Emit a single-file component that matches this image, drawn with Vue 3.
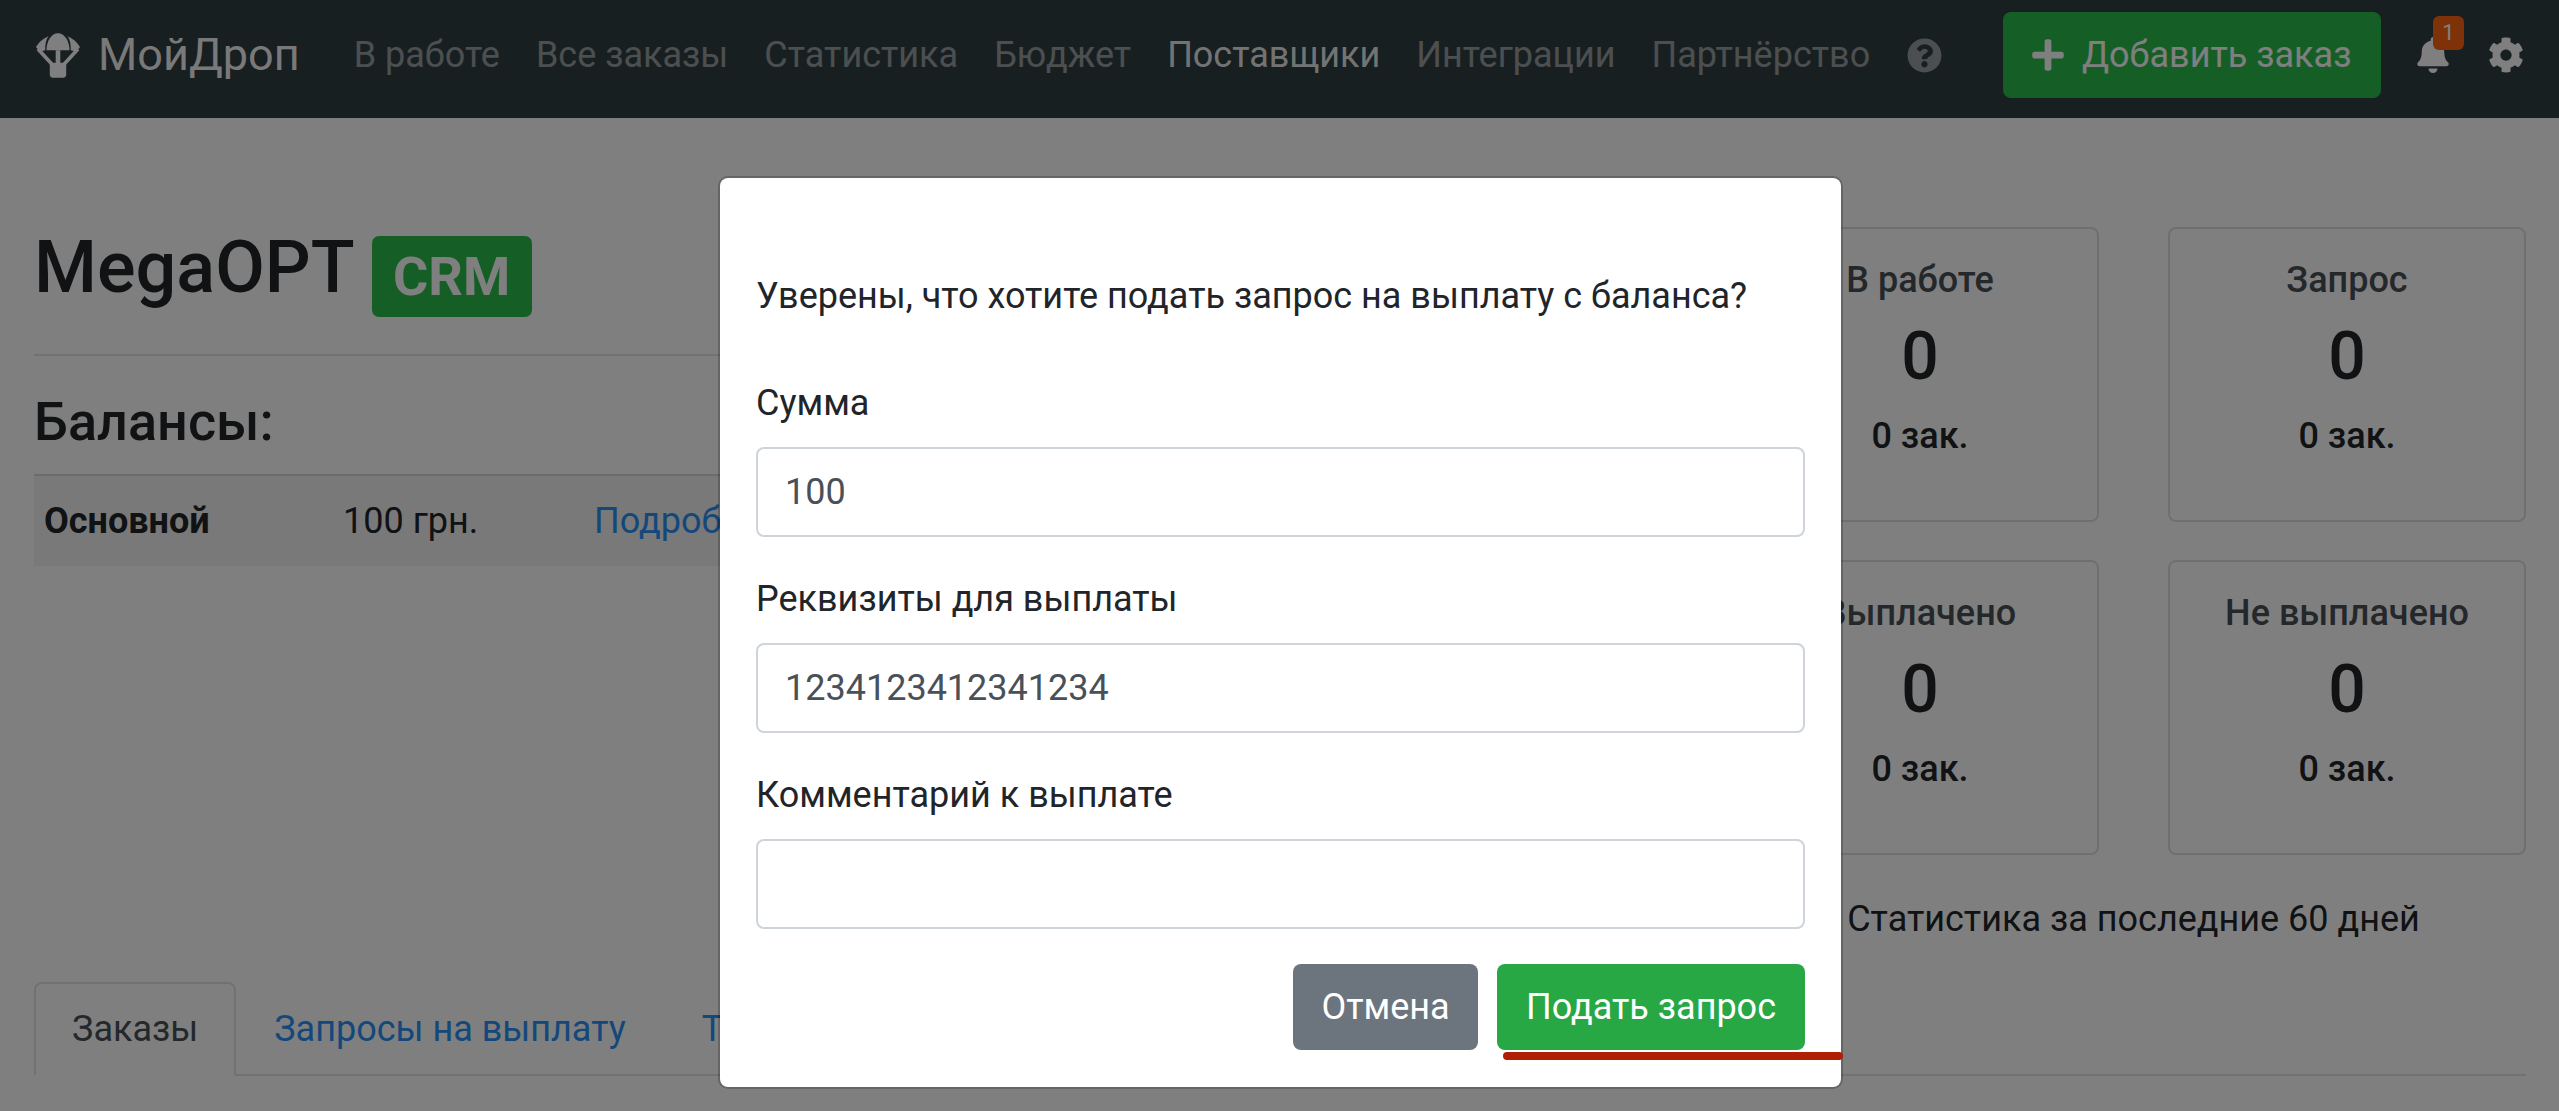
<script setup>
const navItems = [
  { label: 'В работе' },
  { label: 'Все заказы' },
  { label: 'Статистика' },
  { label: 'Бюджет' },
  { label: 'Поставщики', active: true },
  { label: 'Интеграции' },
  { label: 'Партнёрство' },
]
const stats = [
  { title: 'В работе', value: 0, count: '0 зак.' },
  { title: 'Запрос', value: 0, count: '0 зак.' },
  { title: 'Выплачено', value: 0, count: '0 зак.' },
  { title: 'Не выплачено', value: 0, count: '0 зак.' },
]
const tabs = [
  { label: 'Заказы', active: true },
  { label: 'Запросы на выплату' },
  { label: 'Транзакции' },
]
</script>

<template>
  <div class="page">
    <header class="navbar">
      <a class="brand">
        <svg class="logo" viewBox="48 32 134 136" aria-hidden="true">
          <path d="M80 84C80 55 95 32 115 32s35 23 35 52z" />
          <rect x="108" y="84" width="14" height="40" />
          <path d="M86 41C70 48 55 60 48 75l12 13 16-4C76 65 78 52 86 41z" />
          <path d="M144 41c16 7 31 19 38 34l-12 13-16-4c0-19-2-32-10-43z" />
          <path class="arm" d="M54 80l42 46M176 80l-42 46" />
          <path d="M90 122h50v36c0 6-4 10-10 10h-30c-6 0-10-4-10-10z" />
        </svg>
        <span>МойДроп</span>
      </a>
      <nav class="nav-links">
        <a v-for="item in navItems" :key="item.label" :class="{ active: item.active }">{{ item.label }}</a>
        <svg class="help" viewBox="0 0 512 512" aria-hidden="true"><path d="M504 256c0 136.997-111.043 248-248 248S8 392.997 8 256C8 119.083 119.043 8 256 8s248 111.083 248 248zM262.655 90c-54.497 0-89.255 22.957-116.549 63.758-3.536 5.286-2.353 12.415 2.715 16.258l34.699 26.31c5.205 3.947 12.621 3.008 16.665-2.122 17.864-22.658 30.113-35.797 57.303-35.797 20.429 0 45.698 13.148 45.698 32.958 0 14.976-12.363 22.667-32.534 33.976C247.128 238.528 216 254.941 216 296v4c0 6.627 5.373 12 12 12h56c6.627 0 12-5.373 12-12v-1.333c0-28.462 83.186-29.647 83.186-106.667 0-58.002-60.165-102-116.531-102zM256 338c-25.365 0-46 20.635-46 46 0 25.364 20.635 46 46 46s46-20.636 46-46c0-25.365-20.635-46-46-46z"/></svg>
      </nav>
      <div class="nav-right">
        <button class="add-btn">
          <svg class="plus" viewBox="0 0 448 512" aria-hidden="true"><path d="M416 208H272V64c0-17.67-14.33-32-32-32h-32c-17.67 0-32 14.33-32 32v144H32c-17.67 0-32 14.33-32 32v32c0 17.67 14.33 32 32 32h144v144c0 17.67 14.33 32 32 32h32c17.67 0 32-14.33 32-32V304h144c17.67 0 32-14.33 32-32v-32c0-17.67-14.33-32-32-32z"/></svg>
          Добавить заказ
        </button>
        <div class="bell-wrap">
          <svg class="bell" viewBox="0 0 448 512" aria-hidden="true"><path d="M224 512c35.32 0 63.97-28.65 63.97-64H160.03c0 35.35 28.65 64 63.97 64zm215.39-149.71c-19.32-20.76-55.47-51.99-55.47-154.29 0-77.7-54.48-139.9-127.94-155.16V32c0-17.67-14.32-32-31.98-32s-31.98 14.33-31.98 32v20.84C118.56 68.1 64.08 130.3 64.08 208c0 102.3-36.15 133.53-55.47 154.29-6 6.45-8.66 14.16-8.61 21.71.11 16.4 12.98 32 32.1 32h383.8c19.12 0 32-15.6 32.1-32 .05-7.55-2.61-15.27-8.61-21.71z"/></svg>
          <span class="badge">1</span>
        </div>
        <svg class="cog" viewBox="0 0 512 512" aria-hidden="true"><path d="M487.4 315.7l-42.6-24.6c4.3-23.2 4.3-47 0-70.2l42.6-24.6c4.9-2.8 7.1-8.6 5.5-14-11.1-35.6-30-67.8-54.7-94.6-3.8-4.1-10-5.1-14.8-2.3L380.8 110c-17.9-15.4-38.5-27.3-60.8-35.1V25.8c0-5.6-3.9-10.5-9.4-11.7-36.7-8.2-74.3-7.8-109.2 0-5.5 1.2-9.4 6.1-9.4 11.7V75c-22.2 7.9-42.8 19.8-60.8 35.1L88.7 85.5c-4.9-2.8-11-1.9-14.8 2.3-24.7 26.7-43.6 58.9-54.7 94.6-1.7 5.4.6 11.2 5.5 14L67.3 221c-4.3 23.2-4.3 47 0 70.2l-42.6 24.6c-4.9 2.8-7.1 8.6-5.5 14 11.1 35.6 30 67.8 54.7 94.6 3.8 4.1 10 5.1 14.8 2.3l42.6-24.6c17.9 15.4 38.5 27.3 60.8 35.1v49.2c0 5.6 3.9 10.5 9.4 11.7 36.7 8.2 74.3 7.8 109.2 0 5.5-1.2 9.4-6.1 9.4-11.7v-49.2c22.2-7.9 42.8-19.8 60.8-35.1l42.6 24.6c4.9 2.8 11 1.9 14.8-2.3 24.7-26.7 43.6-58.9 54.7-94.6 1.5-5.5-.7-11.3-5.6-14.1zM256 336c-44.1 0-80-35.9-80-80s35.9-80 80-80 80 35.9 80 80-35.9 80-80 80z"/></svg>
      </div>
    </header>

    <main class="content">
      <div class="columns">
        <section class="left">
          <h1 class="title">MegaOPT <span class="crm">CRM</span></h1>
          <hr class="rule" />
          <h2 class="sub">Балансы:</h2>
          <div class="balance-row">
            <strong class="b-name">Основной</strong>
            <span class="b-sum">100 грн.</span>
            <a class="b-link">Подробнее</a>
          </div>
        </section>
        <section class="right">
          <div class="cards">
            <div v-for="s in stats" :key="s.title" class="card">
              <div class="card-title">{{ s.title }}</div>
              <div class="card-value">{{ s.value }}</div>
              <div class="card-count">{{ s.count }}</div>
            </div>
          </div>
          <p class="period">Статистика за последние 60 дней</p>
        </section>
      </div>
      <ul class="tabs">
        <li v-for="t in tabs" :key="t.label" class="tab" :class="{ active: t.active }">{{ t.label }}</li>
      </ul>
    </main>

    <div class="backdrop"></div>

    <div class="modal">
      <p class="question">Уверены, что хотите подать запрос на выплату с баланса?</p>
      <label class="label">Сумма</label>
      <div class="input">100</div>
      <label class="label">Реквизиты для выплаты</label>
      <div class="input">1234123412341234</div>
      <label class="label">Комментарий к выплате</label>
      <div class="input"></div>
      <div class="actions">
        <button class="btn cancel">Отмена</button>
        <button class="btn submit">Подать запрос</button>
      </div>
      <div class="underline"></div>
    </div>
  </div>
</template>

<style>
html, body { margin: 0; padding: 0; background: #fff; }
</style>

<style scoped>
* { box-sizing: border-box; }
.page {
  position: relative;
  width: 2559px;
  height: 1111px;
  overflow: hidden;
  background: #fff;
  color: #212529;
  font-family: Roboto, "Noto Sans", sans-serif;
  font-size: 36px;
  line-height: 54px;
}
.navbar {
  display: flex;
  align-items: center;
  height: 118px;
  background: #313e43;
  padding: 0 35px 8px 36px;
}
.brand {
  display: flex;
  align-items: center;
  gap: 18px;
  font-size: 45px;
  color: rgba(255,255,255,.95);
  margin-right: 54px;
}
.logo { width: 44px; height: 45px; fill: #fff; }
.arm { fill: none; stroke: #fff; stroke-width: 11; }
.nav-links {
  display: flex;
  align-items: center;
  gap: 36px;
}
.nav-links a { color: rgba(255,255,255,.5); }
.nav-links a.active { color: rgba(255,255,255,.9); }
.help { width: 35px; height: 35px; fill: rgba(255,255,255,.5); margin-left: 1px; }
.nav-right {
  margin-left: auto;
  display: flex;
  align-items: center;
}
.add-btn {
  display: flex;
  align-items: center;
  gap: 18px;
  height: 86px;
  width: 378px;
  padding: 0 29px;
  background: #2bbf4f;
  border: 0;
  border-radius: 8px;
  color: #fff;
  font: inherit;
  white-space: nowrap;
}
.plus { width: 32px; height: 36px; fill: #fff; }
.bell-wrap { position: relative; margin-left: 36px; height: 36px; width: 32px; }
.bell { display: block; width: 32px; height: 36px; fill: #fff; }
.badge {
  position: absolute;
  left: 16px;
  top: -21px;
  width: 31px;
  height: 34px;
  border-radius: 6px;
  background: #ff6210;
  color: #fff;
  font-size: 22px;
  line-height: 34px;
  text-align: center;
}
.cog { width: 36px; height: 36px; fill: #fff; margin-left: 39px; }

.content { padding: 0 33px 0 34px; }
.columns { display: flex; justify-content: space-between; height: 864px; padding-top: 109px; }
.left { flex: 1; margin-right: 60px; }
.title {
  margin: 0;
  display: flex;
  align-items: flex-start;
  gap: 17px;
  font-size: 72px;
  line-height: 82px;
  font-weight: 500;
  color: #212529;
  height: 127px;
}
.crm {
  display: inline-flex;
  align-items: center;
  justify-content: center;
  width: 160px;
  height: 81px;
  margin-top: 9px;
  border-radius: 7px;
  background: #2bbf4f;
  color: #fff;
  font-size: 54px;
  font-weight: 700;
  line-height: 1;
}
.rule { margin: 0; border: 0; border-top: 2px solid rgba(0,0,0,.1); }
.sub {
  margin: 36px 0 0;
  font-size: 54px;
  line-height: 60px;
  font-weight: 500;
  height: 82px;
}
.balance-row {
  display: flex;
  align-items: center;
  height: 92px;
  padding-left: 10px;
  background: rgba(0,0,0,.05);
  border-top: 2px solid rgba(0,0,0,.1);
}
.b-name { width: 299px; font-weight: 700; }
.b-sum { width: 251px; }
.b-link { color: #2a90f5; }
.right { width: 785px; }
.cards {
  display: grid;
  grid-template-columns: 358px 358px;
  justify-content: space-between;
  row-gap: 38px;
}
.card {
  height: 295px;
  padding-top: 24px;
  border: 2px solid rgba(0,0,0,.125);
  border-radius: 8px;
  text-align: center;
}
.card-title { font-weight: 500; color: #495057; }
.card-value { font-size: 66px; line-height: 80px; font-weight: 500; margin-top: 10px; }
.card-count { font-weight: 500; margin-top: 12px; }
.period { margin: 37px 0 0; text-align: center; }
.tabs {
  display: flex;
  list-style: none;
  margin: 0;
  padding: 0;
  border-bottom: 2px solid #dee2e6;
}
.tab {
  display: flex;
  align-items: center;
  padding: 0 36px;
  height: 94px;
  margin-bottom: -2px;
  color: #2a90f5;
  border: 2px solid transparent;
  border-radius: 8px 8px 0 0;
}
.tab.active {
  color: #495057;
  background: #fff;
  border-color: #dee2e6 #dee2e6 #fff;
}

.backdrop {
  position: absolute;
  inset: 0;
  background: rgba(0,0,0,.5);
}
.modal {
  position: absolute;
  left: 720px;
  top: 178px;
  width: 1121px;
  height: 909px;
  padding: 91px 36px 0;
  background: #fff;
  border-radius: 8px;
  box-shadow: 0 0 0 2px rgba(0,0,0,.2);
}
.question { margin: 0 0 53px; line-height: 54px; color: #212529; }
.label { display: block; margin-bottom: 17px; line-height: 54px; }
.input {
  height: 90px;
  margin-bottom: 35px;
  padding: 16px 27px;
  border: 2px solid #ced4da;
  border-radius: 8px;
  color: #495057;
}
.actions {
  display: flex;
  justify-content: flex-end;
  gap: 19px;
}
.btn {
  height: 86px;
  border: 0;
  border-radius: 8px;
  color: #fff;
  font: inherit;
}
.cancel { width: 185px; background: #6c757d; }
.submit { width: 308px; background: #28a745; }
.underline {
  position: absolute;
  left: 783px;
  top: 874px;
  width: 340px;
  height: 8px;
  border-radius: 4px;
  background: #b01e06;
}
</style>
